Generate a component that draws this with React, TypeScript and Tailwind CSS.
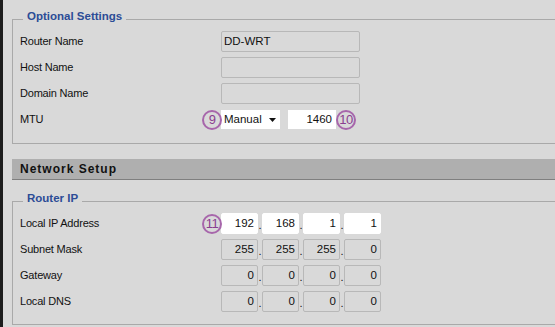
import React from "react";

const labelFont = { fontFamily: '"Liberation Sans", Arial, sans-serif' };

function Badge({ n, className }: { n: string; className: string }) {
  return (
    <span
      className={
        "absolute top-1/2 -translate-y-1/2 w-[20px] h-[20px] rounded-full border-2 border-[#a766ab] text-[#8a3d90] flex items-center justify-center text-[13px] tracking-[-0.5px] leading-none " +
        className
      }
    >
      {n}
    </span>
  );
}

function Row({ label, children }: { label: string; children?: React.ReactNode }) {
  return (
    <div className="flex items-center h-[21px]">
      <div className="w-[201px] text-[11px] tracking-[-0.2px] text-[#111]">{label}</div>
      <div className="relative flex items-center h-[21px]">{children}</div>
    </div>
  );
}

function TextBox({ value }: { value?: string }) {
  return (
    <div className="w-[139px] h-[21px] rounded-[2px] border border-[#b8b8b8] bg-[#d9d9d9] pl-[2px] flex items-center text-[11.5px] text-[#111]">
      {value}
    </div>
  );
}

function IpBox({ v, active }: { v: string; active?: boolean }) {
  return (
    <div
      className={
        "w-[37px] h-[21px] rounded-[2px] border flex items-center justify-end pr-[3px] text-[11.5px] text-[#111] " +
        (active ? "bg-white border-white" : "bg-[#d9d9d9] border-[#b8b8b8]")
      }
    >
      {v}
    </div>
  );
}

function Ip({ vals, active }: { vals: string[]; active?: boolean }) {
  return (
    <div className="flex items-center">
      {vals.map((v, i) => (
        <React.Fragment key={i}>
          <IpBox v={v} active={active} />
          {i < 3 && <span className="w-[4px] text-center text-[11px] text-[#111] self-end leading-[17px]">.</span>}
        </React.Fragment>
      ))}
    </div>
  );
}

export default function App() {
  return (
    <div className="w-[555px] h-[327px] overflow-hidden flex bg-[#d9d9d9]" style={labelFont}>
      <div className="w-[3px] shrink-0 bg-[#1c1c1c]" />
      <div className="flex-1 pl-[9px] pt-[9px] flex flex-col">
        <fieldset className="border border-r-0 border-[#a9a9a9] p-0 pl-[7px] pb-[13px] m-0 min-w-0">
          <legend className="ml-[3px] px-[4px] pb-[6px] text-[11.5px] leading-[14px] font-bold text-[#2c4c96]">
            Optional Settings
          </legend>
          <div className="mt-[2px] flex flex-col gap-[5px]">
            <Row label="Router Name">
              <TextBox value="DD-WRT" />
            </Row>
            <Row label="Host Name">
              <TextBox />
            </Row>
            <Row label="Domain Name">
              <TextBox />
            </Row>
            <Row label="MTU">
              <Badge n="9" className="left-[-19px]" />
              <div className="w-[59px] h-[19px] bg-white flex items-center pl-[3px] pr-[4px] text-[11.5px] text-[#111]">
                <span className="flex-1">Manual</span>
                <svg width="7" height="4" viewBox="0 0 7 4" className="mb-[-1px]">
                  <path d="M0 0 H7 L3.5 4 Z" fill="#111" />
                </svg>
              </div>
              <div className="ml-[8px] w-[48px] h-[19px] bg-white flex items-center justify-end pr-[4px] text-[11.5px] text-[#111]">
                1460
              </div>
              <Badge n="10" className="left-[115px]" />
            </Row>
          </div>
        </fieldset>

        <div className="mt-[15px] h-[21px] bg-[#afafaf] border-b border-[#7f7f7f] flex items-center pl-[8px] text-[12px] font-bold tracking-[1px] text-[#111]">
          Network Setup
        </div>

        <fieldset className="mt-[11px] border border-r-0 border-[#a9a9a9] p-0 pl-[7px] pb-[12px] m-0 min-w-0">
          <legend className="ml-[3px] px-[4px] pb-[6px] text-[11.5px] leading-[14px] font-bold text-[#2c4c96]">
            Router IP
          </legend>
          <div className="mt-[2px] flex flex-col gap-[5px]">
            <Row label="Local IP Address">
              <Badge n="11" className="left-[-19px]" />
              <Ip vals={["192", "168", "1", "1"]} active />
            </Row>
            <Row label="Subnet Mask">
              <Ip vals={["255", "255", "255", "0"]} />
            </Row>
            <Row label="Gateway">
              <Ip vals={["0", "0", "0", "0"]} />
            </Row>
            <Row label="Local DNS">
              <Ip vals={["0", "0", "0", "0"]} />
            </Row>
          </div>
        </fieldset>
      </div>
    </div>
  );
}
